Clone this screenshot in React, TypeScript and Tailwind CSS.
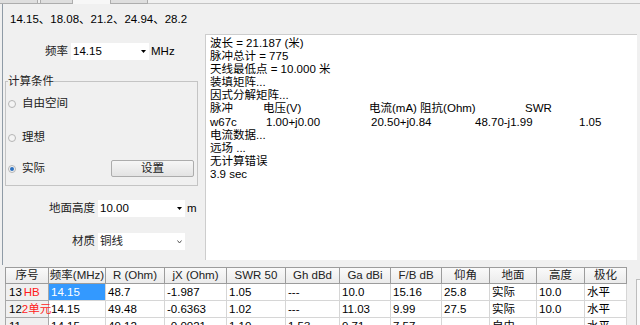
const font = "font-['Liberation_Sans','Noto_Sans_CJK_SC',sans-serif]";

const headers = [
  { label: "序号", w: "w-[44px]" },
  { label: "频率(MHz)", w: "w-[57px]" },
  { label: "R (Ohm)", w: "w-[59px]" },
  { label: "jX (Ohm)", w: "w-[62px]" },
  { label: "SWR 50", w: "w-[59px]" },
  { label: "Gh dBd", w: "w-[54px]" },
  { label: "Ga dBi", w: "w-[51px]" },
  { label: "F/B dB", w: "w-[51px]" },
  { label: "仰角", w: "w-[48px]" },
  { label: "地面", w: "w-[47px]" },
  { label: "高度", w: "w-[48px]" },
  { label: "极化", w: "w-[42px]" },
];

const rows = [
  { tag: "HB", gap: true, cells: ["13", "14.15", "48.7", "-1.987", "1.05", "---", "10.0", "15.16", "25.8", "实际", "10.0", "水平"], sel: 1 },
  { tag: "2单元", gap: false, cells: ["12", "14.15", "49.48", "-0.6363", "1.02", "---", "11.03", "9.99", "27.5", "实际", "10.0", "水平"], sel: -1 },
  { tag: "", gap: false, cells: ["11", "14.15", "49.12", "-0.0021", "1.10", "1.53", "9.71", "7.57", "", "自由", "", "水平"], sel: -1 },
];

function Arrow() {
  return (
    <svg width="5" height="3" viewBox="0 0 5 3" className="ml-auto mr-[3px]">
      <path d="M0 0h5L2.5 3z" fill="#000" />
    </svg>
  );
}

function Chevron() {
  return (
    <svg width="5" height="4" viewBox="0 0 5 4" className="ml-auto mr-[3px]">
      <path d="M0.5 0.5L2.5 3L4.5 0.5" fill="none" stroke="#555" strokeWidth="1" />
    </svg>
  );
}

function Radio({ on }: { on?: boolean }) {
  return (
    <span className="flex h-[8px] w-[8px] items-center justify-center rounded-full border border-[#b5b5b5] bg-[#f4f4f4]">
      {on && <span className="h-[4px] w-[4px] rounded-full bg-[#2b6fbf]" />}
    </span>
  );
}

export default function App() {
  return (
    <div className={`${font} h-[325px] w-[640px] overflow-hidden bg-[#f0f0f0] text-[11.5px] text-[#222]`}>
      {/* tab strip */}
      <div className="flex h-[4px]">
        <div className="w-[38px] border-b border-r border-[#adadad] bg-[#dedede]" />
        <div className="w-[2px] border-b border-[#adadad]" />
        <div className="w-[33px] border-x border-b border-[#adadad] bg-[#dedede]" />
        <div className="w-[37px] bg-[#f7f7f7]" />
        <div className="w-[38px] border-x border-b border-[#adadad] bg-[#dedede]" />
        <div className="flex-1 border-b border-[#c4c4c4]" />
      </div>

      <div className="ml-[2px] border-l border-[#8f9ba6] pb-[5px]">
        <div className="h-[30px] pl-[7px] pt-[8px] leading-[15px] text-black">14.15、18.08、21.2、24.94、28.2</div>

        <div className="flex">
          <div className="w-[202px] flex-none">
            <div className="mt-[9px] flex h-[17px] items-center">
              <span className="w-[65px] text-right">频率</span>
              <div className="ml-[3px] flex h-[17px] w-[78px] items-center bg-white pl-[2px] text-black">
                14.15
                <Arrow />
              </div>
              <span className="ml-[2px] text-black">MHz</span>
            </div>

            <fieldset className="ml-[2px] mt-[13px] w-[193px] border border-[#c4c4c4] pb-[8px] pl-[2px] pr-[3px]">
              <legend className="leading-[16px]">计算条件</legend>
              <div className="mt-[7px] flex h-[16px] items-center gap-[6px]">
                <Radio />
                <span>自由空间</span>
              </div>
              <div className="mt-[18px] flex h-[16px] items-center gap-[6px]">
                <Radio />
                <span>理想</span>
              </div>
              <div className="mt-[14px] flex h-[17px] items-center gap-[6px]">
                <Radio on />
                <span>实际</span>
                <button className="ml-auto h-[17px] w-[83px] rounded-[2px] border border-[#acacac] bg-gradient-to-b from-[#f6f6f6] to-[#e3e3e3] leading-[15px]">
                  设置
                </button>
              </div>
            </fieldset>

            <div className="mt-[14px] flex h-[17px] items-center">
              <span className="w-[92px] text-right">地面高度</span>
              <div className="ml-[3px] flex h-[17px] w-[87px] items-center bg-white pl-[2px] text-black">
                10.00
                <Arrow />
              </div>
              <span className="ml-[2px] text-black">m</span>
            </div>

            <div className="mt-[16px] flex h-[17px] items-center">
              <span className="w-[92px] text-right">材质</span>
              <div className="ml-[3px] flex h-[17px] w-[87px] items-center bg-white pl-[2px]">
                铜线
                <Chevron />
              </div>
            </div>
          </div>

          <div className="h-[226px] w-[432px] flex-none border-l border-t border-[#cdcdcd] bg-white pl-[4px] pt-[2px] leading-[13.1px] text-black">
            <div>波长 = 21.187 (米)</div>
            <div>脉冲总计 = 775</div>
            <div>天线最低点 = 10.000 米</div>
            <div>装填矩阵...</div>
            <div>因式分解矩阵...</div>
            <div className="flex whitespace-nowrap">
              <span className="w-[53px]">脉冲</span>
              <span className="w-[106px]">电压(V)</span>
              <span className="w-[156px]">电流(mA) 阻抗(Ohm)</span>
              <span>SWR</span>
            </div>
            <div className="flex whitespace-nowrap">
              <span className="w-[56px]">w67c</span>
              <span className="w-[105px]">1.00+j0.00</span>
              <span className="w-[104px]">20.50+j0.84</span>
              <span className="w-[104px]">48.70-j1.99</span>
              <span>1.05</span>
            </div>
            <div>电流数据...</div>
            <div>远场 ...</div>
            <div>无计算错误</div>
            <div>3.9 sec</div>
          </div>
        </div>
      </div>

      <div className="mt-[2px] flex">
        <div className="ml-[5px] flex-none">
          <div className="flex">
            {headers.map((h, i) => (
              <div
                key={h.label}
                className={`${h.w} h-[17px] border-b border-r border-t border-[#9c9c9c] bg-gradient-to-b from-[#fafafa] to-[#ebebeb] text-center leading-[15px] ${i === 0 ? "border-l" : ""}`}
              >
                {h.label}
              </div>
            ))}
          </div>
          {rows.map((r) => (
            <div key={r.cells[0]} className="flex">
              {r.cells.map((c, i) =>
                i === 0 ? (
                  <div
                    key={i}
                    className={`${headers[i].w} h-[17px] whitespace-nowrap border-b border-l border-r border-[#a8a8a8] bg-[#f0f0f0] pl-[3px] leading-[16px] text-black`}
                  >
                    {c}
                    {r.tag && (
                      <span className={`relative z-10 text-[#ff1a1a] ${r.gap ? "ml-[2px]" : ""}`}>{r.tag}</span>
                    )}
                  </div>
                ) : (
                  <div
                    key={i}
                    className={`${headers[i].w} h-[17px] whitespace-nowrap border-b border-r border-[#d6d6d6] pl-[2px] leading-[16px] ${
                      i === r.sel ? "bg-[#3399ff] text-white" : "bg-white text-black"
                    }`}
                  >
                    {c}
                  </div>
                )
              )}
            </div>
          ))}
        </div>
        <div className="ml-auto mt-[12px] h-[60px] w-[4px] border-l border-t border-[#bdbdbd] bg-[#f9f9f9]" />
      </div>
    </div>
  );
}
